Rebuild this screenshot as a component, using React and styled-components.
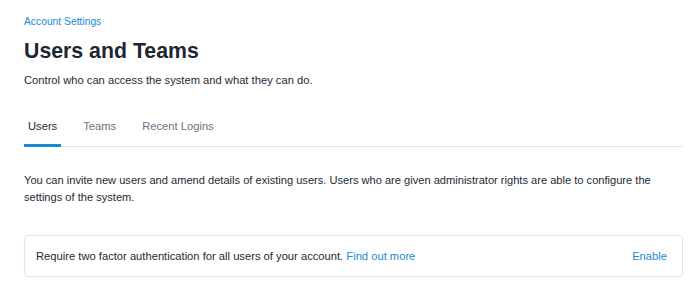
import styled, { createGlobalStyle } from "styled-components"

const GlobalStyle = createGlobalStyle`
	body {
		margin: 0;
		background: #ffffff;
		font-family: "Liberation Sans", Arial, sans-serif;
		color: #222a33;
	}
`

const Page = styled.div`
	padding: 15px 17px 0 24px;
	display: flex;
	flex-direction: column;
`
const Breadcrumb = styled.a`
	font-size: 10.3px;
	line-height: 14px;
	color: #1a8bd4;
	text-decoration: none;
`
const Title = styled.h1`
	margin: 9px 0 0;
	font-size: 21.3px;
	line-height: 26px;
	font-weight: 700;
	color: #1d2633;
`
const Subtitle = styled.p`
	margin: 8px 0 0;
	font-size: 11.2px;
	line-height: 17px;
	color: #222a33;
`
const Tabs = styled.div`
	margin-top: 29px;
	display: flex;
	gap: 18px;
	border-bottom: 1px solid #e1e5ea;
`
const Tab = styled.div`
	font-size: 11.2px;
	line-height: 17px;
	padding: 0 4px 9px;
	margin-bottom: -1px;
	color: ${(p) => (p.active ? "#222a33" : "#6c737c")};
	border-bottom: 3px solid ${(p) => (p.active ? "#1a8bd4" : "transparent")};
`
const Intro = styled.p`
	margin: 25px 0 0;
	font-size: 11.1px;
	line-height: 17px;
	color: #222a33;
`
const Card = styled.div`
	margin-top: 29px;
	display: flex;
	justify-content: space-between;
	align-items: center;
	padding: 12px 15px 12px 11px;
	border: 1px solid #e0e3e8;
	border-radius: 4px;
	box-shadow: 0 1px 2px rgba(0, 0, 0, 0.04);
	font-size: 11.2px;
	line-height: 16px;
`
const Link = styled.a`
	color: #1a8bd4;
	text-decoration: none;
`

const App = () => {
	const tabs = ["Users", "Teams", "Recent Logins"]
	return (
		<>
			<GlobalStyle />
			<Page>
				<Breadcrumb href="#">Account Settings</Breadcrumb>
				<Title>Users and Teams</Title>
				<Subtitle>Control who can access the system and what they can do.</Subtitle>
				<Tabs>
					{tabs.map((t, i) => (
						<Tab key={t} active={i === 0}>
							{t}
						</Tab>
					))}
				</Tabs>
				<Intro>
					You can invite new users and amend details of existing users. Users who are given
					administrator rights are able to configure the settings of the system.
				</Intro>
				<Card>
					<span>
						Require two factor authentication for all users of your account.{" "}
						<Link href="#">Find out more</Link>
					</span>
					<Link href="#">Enable</Link>
				</Card>
			</Page>
		</>
	)
}
export default App
